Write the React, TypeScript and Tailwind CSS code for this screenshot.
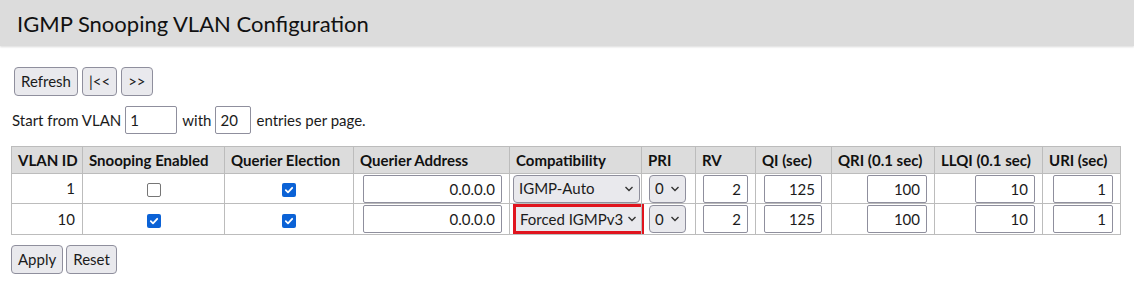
import React from "react";

const font = { fontFamily: '"Source Sans Pro", Lato, "Liberation Sans", sans-serif' };

function Btn({ children }: { children: React.ReactNode }) {
  return (
    <button className="h-[29px] px-[6px] bg-[#e9e9ed] border border-[#8f8f9d] rounded-[4px] text-[15px] text-[#1b1b1b] leading-none">
      {children}
    </button>
  );
}

function Check({ checked }: { checked: boolean }) {
  return checked ? (
    <span className="inline-flex w-[14px] h-[14px] rounded-[2px] bg-[#0b62d6] items-center justify-center align-middle">
      <svg width="10" height="10" viewBox="0 0 10 10">
        <path d="M1.8 5.2 L4 7.3 L8.2 2.8" stroke="white" strokeWidth="1.8" fill="none" strokeLinecap="round" strokeLinejoin="round" />
      </svg>
    </span>
  ) : (
    <span className="inline-block w-[14px] h-[14px] rounded-[2px] border border-[#767676] bg-white align-middle" />
  );
}

function Num({ v, w, left }: { v: string; w: string; left?: boolean }) {
  return (
    <div className={`${w} h-[28px] border border-[#8f8f9d] rounded-[2px] bg-white text-right pr-[6px] text-[15px] leading-[26px] text-[#1b1b1b] ${left ? "" : "ml-auto"}`}>
      {v}
    </div>
  );
}

function Sel({ v, w, red }: { v: string; w: string; red?: boolean }) {
  return (
    <div
      className={`${w} ${red ? "h-[30px] border-[3px] border-[#e0141e] rounded-none pl-[4px]" : "h-[28px] border border-[#8f8f9d] rounded-[4px] pl-[5px]"} bg-[#e9e9ed] flex items-center justify-between pr-[5px] text-[15px] text-[#1b1b1b] whitespace-nowrap`}
    >
      <span>{v}</span>
      <svg width="10" height="6" viewBox="0 0 10 6" className="shrink-0 ml-[4px]">
        <path d="M1.5 1 L5 4.5 L8.5 1" stroke="#333" strokeWidth="1.4" fill="none" />
      </svg>
    </div>
  );
}

const th = "border border-[#bcbcbc] bg-[#dcdcdc] font-bold text-[15px] text-left px-[6px] h-[27px] text-[#111] whitespace-nowrap";
const td = "border border-[#bcbcbc] h-[30px] px-[3px] py-0 text-[15px] text-[#1b1b1b]";

export default function App() {
  const rows = [
    { id: "1", snoop: false, comp: "IGMP-Auto", red: false },
    { id: "10", snoop: true, comp: "Forced IGMPv3", red: true },
  ];
  return (
    <div style={font} className="w-[1134px] h-[287px] bg-white text-[#1b1b1b]">
      <div className="h-[46px] bg-[#dcdcdc] flex items-center pl-[17px] text-[22px] text-[#111] shadow-[0_1px_2px_rgba(0,0,0,0.15)]">
        IGMP Snooping VLAN Configuration
      </div>
      <div className="pt-[21px] pl-[14px] flex gap-[4px]">
        <Btn>Refresh</Btn>
        <Btn>|&lt;&lt;</Btn>
        <Btn>&gt;&gt;</Btn>
      </div>
      <div className="mt-[10px] pl-[12px] flex items-center text-[15px] gap-[4px]">
        <span>Start from VLAN</span>
        <div className="w-[52px] h-[28px] border border-[#8f8f9d] rounded-[2px] pl-[4px] leading-[26px]">1</div>
        <span className="ml-[1px]">with</span>
        <div className="w-[36px] h-[28px] border border-[#8f8f9d] rounded-[2px] pl-[4px] leading-[26px]">20</div>
        <span className="ml-[1px]">entries per page.</span>
      </div>
      <table className="mt-[12px] ml-[11px] border-collapse table-fixed w-[1109px]">
        <colgroup>
          <col className="w-[71px]" />
          <col className="w-[142px]" />
          <col className="w-[129px]" />
          <col className="w-[156px]" />
          <col className="w-[132px]" />
          <col className="w-[54px]" />
          <col className="w-[60px]" />
          <col className="w-[76px]" />
          <col className="w-[103px]" />
          <col className="w-[108px]" />
          <col className="w-[78px]" />
        </colgroup>
        <thead>
          <tr>
            <th className={`${th} px-[5px]`}>VLAN ID</th>
            <th className={th}>Snooping Enabled</th>
            <th className={th}>Querier Election</th>
            <th className={th}>Querier Address</th>
            <th className={th}>Compatibility</th>
            <th className={th}>PRI</th>
            <th className={th}>RV</th>
            <th className={th}>QI (sec)</th>
            <th className={th}>QRI (0.1 sec)</th>
            <th className={th}>LLQI (0.1 sec)</th>
            <th className={th}>URI (sec)</th>
          </tr>
        </thead>
        <tbody>
          {rows.map((r) => (
            <tr key={r.id}>
              <td className={`${td} text-right pr-[7px]`}>{r.id}</td>
              <td className={`${td} text-center`}><Check checked={r.snoop} /></td>
              <td className={`${td} text-center`}><Check checked={true} /></td>
              <td className={`${td} pr-[7px]`}><Num v="0.0.0.0" w="w-[139px]" /></td>
              <td className={`${td} ${r.red ? "px-0" : ""}`}><Sel v={r.comp} w={r.red ? "w-[131px]" : "w-[127px]"} red={r.red} /></td>
              <td className={`${td} pl-[7px]`}><Sel v="0" w="w-[37px]" /></td>
              <td className={`${td} pl-[7px]`}><Num v="2" w="w-[45px]" left /></td>
              <td className={`${td} pl-[8px]`}><Num v="125" w="w-[58px]" left /></td>
              <td className={`${td} pr-[7px]`}><Num v="100" w="w-[60px]" /></td>
              <td className={`${td} pr-[7px]`}><Num v="10" w="w-[60px]" /></td>
              <td className={`${td} pr-[7px]`}><Num v="1" w="w-[60px]" /></td>
            </tr>
          ))}
        </tbody>
      </table>
      <div className="mt-[10px] pl-[11px] flex gap-[3px]">
        <Btn>Apply</Btn>
        <Btn>Reset</Btn>
      </div>
    </div>
  );
}
